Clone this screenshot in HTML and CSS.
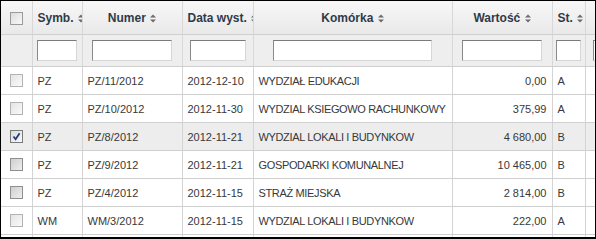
FILE: index.html
```html
<!DOCTYPE html>
<html lang="pl">
<head>
<meta charset="utf-8">
<title>Dokumenty</title>
<link rel="stylesheet" href="styles.css">
</head>
<body>
<div class="frame">
<table class="grid">
  <colgroup>
    <col class="c-chk"><col class="c-sym"><col class="c-num"><col class="c-date"><col class="c-unit"><col class="c-val"><col class="c-st"><col class="c-more">
  </colgroup>
  <thead>
    <tr class="head">
      <th class="left"><span class="cb cb-head"></span></th>
      <th class="left">Symb. <svg class="sort" width="6" height="9" viewBox="0 0 6 9"><polygon points="0,3.5 3,0.5 6,3.5"/><polygon points="0,5.5 3,8.5 6,5.5"/></svg></th>
      <th>Numer <svg class="sort" width="6" height="9" viewBox="0 0 6 9"><polygon points="0,3.5 3,0.5 6,3.5"/><polygon points="0,5.5 3,8.5 6,5.5"/></svg></th>
      <th class="left">Data wyst. <svg class="sort" width="6" height="9" viewBox="0 0 6 9"><polygon points="0,3.5 3,0.5 6,3.5"/><polygon points="0,5.5 3,8.5 6,5.5"/></svg></th>
      <th>Komórka <svg class="sort" width="6" height="9" viewBox="0 0 6 9"><polygon points="0,3.5 3,0.5 6,3.5"/><polygon points="0,5.5 3,8.5 6,5.5"/></svg></th>
      <th>Wartość <svg class="sort" width="6" height="9" viewBox="0 0 6 9"><polygon points="0,3.5 3,0.5 6,3.5"/><polygon points="0,5.5 3,8.5 6,5.5"/></svg></th>
      <th class="left">St. <svg class="sort" width="6" height="9" viewBox="0 0 6 9"><polygon points="0,3.5 3,0.5 6,3.5"/><polygon points="0,5.5 3,8.5 6,5.5"/></svg></th>
      <th></th>
    </tr>
    <tr class="filter">
      <td></td>
      <td><input type="text"></td>
      <td><input type="text"></td>
      <td><input type="text"></td>
      <td><input type="text"></td>
      <td><input type="text"></td>
      <td><input type="text"></td>
      <td class="left"><input type="text"></td>
    </tr>
  </thead>
  <tbody>
    <tr>
      <td class="chk"><span class="cb"></span></td>
      <td>PZ</td><td>PZ/11/2012</td><td>2012-12-10</td><td class="txt">WYDZIAŁ EDUKACJI</td><td class="num">0,00</td><td>A</td><td></td>
    </tr>
    <tr>
      <td class="chk"><span class="cb"></span></td>
      <td>PZ</td><td>PZ/10/2012</td><td>2012-11-30</td><td class="txt">WYDZIAL KSIEGOWO RACHUNKOWY</td><td class="num">375,99</td><td>A</td><td></td>
    </tr>
    <tr class="sel">
      <td class="chk"><span class="cb cb-on"><svg width="9" height="9" viewBox="0 0 9 9"><path d="M1.5 4.5 L3.6 7.2 L7.6 1.2" fill="none" stroke="#1f3f7a" stroke-width="1.8"/></svg></span></td>
      <td>PZ</td><td>PZ/8/2012</td><td>2012-11-21</td><td class="txt">WYDZIAL LOKALI I BUDYNKOW</td><td class="num">4 680,00</td><td>B</td><td></td>
    </tr>
    <tr>
      <td class="chk"><span class="cb cb-dark"></span></td>
      <td>PZ</td><td>PZ/9/2012</td><td>2012-11-21</td><td class="txt">GOSPODARKI KOMUNALNEJ</td><td class="num">10 465,00</td><td>B</td><td></td>
    </tr>
    <tr>
      <td class="chk"><span class="cb cb-dark"></span></td>
      <td>PZ</td><td>PZ/4/2012</td><td>2012-11-15</td><td class="txt">STRAŻ MIEJSKA</td><td class="num">2 814,00</td><td>B</td><td></td>
    </tr>
    <tr>
      <td class="chk"><span class="cb"></span></td>
      <td>WM</td><td>WM/3/2012</td><td>2012-11-15</td><td class="txt">WYDZIAL LOKALI I BUDYNKOW</td><td class="num">222,00</td><td>A</td><td></td>
    </tr>
    <tr>
      <td class="chk"></td>
      <td></td><td></td><td></td><td></td><td></td><td></td><td></td>
    </tr>
  </tbody>
</table>
</div>
</body>
</html>
```

FILE: styles.css
```css
html, body {
  margin: 0;
  padding: 0;
  background: #ffffff;
}

.frame {
  width: 596px;
  height: 239px;
  box-sizing: border-box;
  border-top: 1px solid #000;
  border-left: 1px solid #000;
  border-right: 1px solid #000;
  border-bottom: 2px solid #000;
  overflow: hidden;
  background: #fff;
}

.grid {
  border-collapse: collapse;
  table-layout: fixed;
  width: 640px;
  font-family: "Liberation Sans", Arial, sans-serif;
  font-size: 11px;
  color: #383838;
}

.c-chk { width: 31px; }
.c-sym { width: 50px; }
.c-num { width: 100px; }
.c-date { width: 71px; }
.c-unit { width: 199px; }
.c-val { width: 100px; }
.c-st { width: 33px; }
.c-more { width: 56px; }

.grid th,
.grid td {
  border-right: 1px solid #d4d4d4;
  border-bottom: 1px solid #cfcfcf;
  padding: 0;
  overflow: hidden;
  white-space: nowrap;
}

.grid .head th {
  height: 33px;
  background: linear-gradient(#f7f7f7, #e9e9e9);
  font-size: 12px;
  font-weight: bold;
  color: #2f3a48;
  text-align: center;
  border-right: 1px solid #d8d8d8;
  border-bottom: 1px solid #d0d0d0;
}

.grid .head th.left {
  text-align: left;
  padding-left: 5px;
}

.grid .head th:first-child {
  padding-left: 0;
  text-align: center;
}

.sort {
  fill: #6b6b6b;
  vertical-align: -1px;
  margin-left: 1px;
}

.grid .filter td {
  height: 31px;
  background: #eeeeee;
  text-align: center;
  border-right: 1px solid #d8d8d8;
}

.grid .filter td.left {
  text-align: left;
  padding-left: 7px;
}

.filter input {
  display: block;
  margin: 0 auto;
  width: 80%;
  height: 21px;
  box-sizing: border-box;
  border: 1px solid #a9a9a9;
  border-top-color: #7a7a7a;
  border-left-color: #8a8a8a;
  border-right-color: #d6d6d6;
  border-bottom-color: #d6d6d6;
  background: #fff;
  padding: 0;
}

.filter td.left input {
  margin: 0;
}

.grid tbody td {
  height: 27px;
  padding-left: 5px;
}

.grid tbody td.txt {
  letter-spacing: -0.35px;
}

.grid tbody td.chk {
  padding-left: 0;
  text-align: center;
}

.grid tbody td.num {
  text-align: right;
  padding-left: 0;
  padding-right: 5px;
}

.grid tbody tr.sel td {
  background: #ededed;
}

.cb {
  display: inline-block;
  width: 13px;
  height: 13px;
  box-sizing: border-box;
  border: 1px solid #b3b3b3;
  background: linear-gradient(135deg, #e4e4e4, #fafafa);
  vertical-align: middle;
  position: relative;
}

.cb-head {
  border-color: #9a9a9a;
  background: linear-gradient(135deg, #dcdcdc, #f8f8f8);
}

.cb-dark {
  border-color: #8f8f8f;
  background: linear-gradient(135deg, #cfcfcf, #eeeeee);
}

.cb-on {
  border-color: #7a7a7a;
  background: linear-gradient(135deg, #dcdcdc, #fafafa);
}

.cb-on svg {
  position: absolute;
  left: 1px;
  top: 1px;
}
```
